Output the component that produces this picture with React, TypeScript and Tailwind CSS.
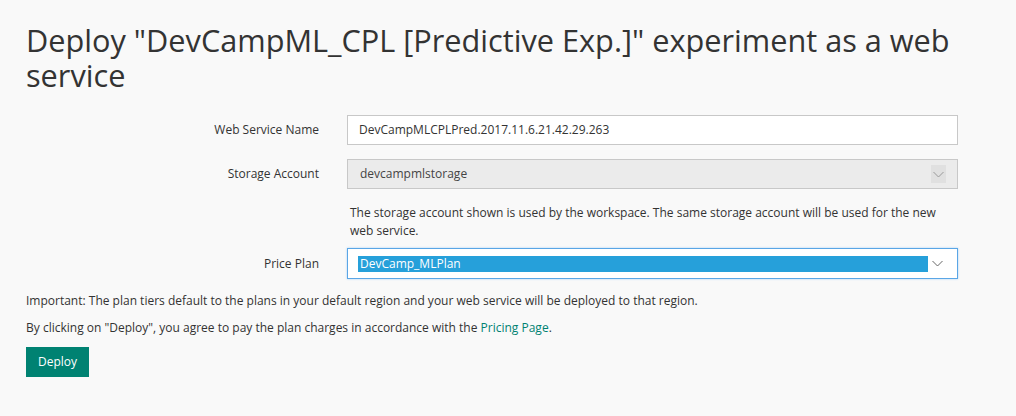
const font = { fontFamily: '"Open Sans", "Noto Sans", sans-serif' };

const Chevron = ({ color = "#666" }: { color?: string }) => (
  <svg width="11" height="7" viewBox="0 0 11 7" fill="none">
    <path d="M0.5 1 L5.5 6 L10.5 1" stroke={color} strokeWidth="1" />
  </svg>
);

const App = () => {
  return (
    <main className="min-h-[416px] w-[1016px] bg-[#f9f9f9] text-[#333] pl-[26px] pt-[23px]" style={font}>
      <h1 className="text-[30.7px] leading-[35px] text-[#333] w-[960px]">
        Deploy "DevCampML_CPL [Predictive Exp.]" experiment as a web service
      </h1>

      <div className="mt-[22px] grid grid-cols-[293px_611px] gap-x-[28px] text-[12px]">
        <label className="text-right self-center">Web Service Name</label>
        <div className="h-[30px] border border-[#c8c8c8] bg-white flex items-center pl-[11px]">
          DevCampMLCPLPred.2017.11.6.21.42.29.263
        </div>

        <label className="text-right self-center mt-[14px]">Storage Account</label>
        <div className="mt-[14px] h-[30px] border border-[#c8c8c8] bg-[#ebebeb] flex items-center justify-between pl-[12px] pr-[11px] text-[#444]">
          <span>devcampmlstorage</span>
          <span className="w-[15px] h-[18px] bg-[#e0e0e0] flex items-center justify-center">
            <Chevron color="#999" />
          </span>
        </div>

        <div />
        <p className="mt-[15px] pl-[3px] leading-[18px] text-[#333]">
          The storage account shown is used by the workspace. The same storage account will be used for the new web
          service.
        </p>

        <label className="text-right self-center mt-[8px]">Price Plan</label>
        <div className="mt-[8px] h-[31px] border border-[#5aa6e6] bg-white flex items-center pl-[10px] pr-[14px] shadow-[0_0_2px_#a8d1f5]">
          <span className="flex-1 h-[16px] bg-[#26a0da] text-white flex items-center pl-[2px]">DevCamp_MLPlan</span>
          <span className="ml-[4px] flex items-center">
            <Chevron />
          </span>
        </div>
      </div>

      <p className="mt-[13px] text-[12px] leading-[18px]">
        Important: The plan tiers default to the plans in your default region and your web service will be deployed to that region.
      </p>
      <p className="mt-[9px] text-[12px] leading-[18px]">
        By clicking on "Deploy", you agree to pay the plan charges in accordance with the{" "}
        <a className="text-[#008272]">Pricing Page</a>.
      </p>
      <button className="mt-[10px] h-[30px] w-[63px] bg-[#008272] text-white text-[12px]">Deploy</button>
    </main>
  );
};

export default App;
